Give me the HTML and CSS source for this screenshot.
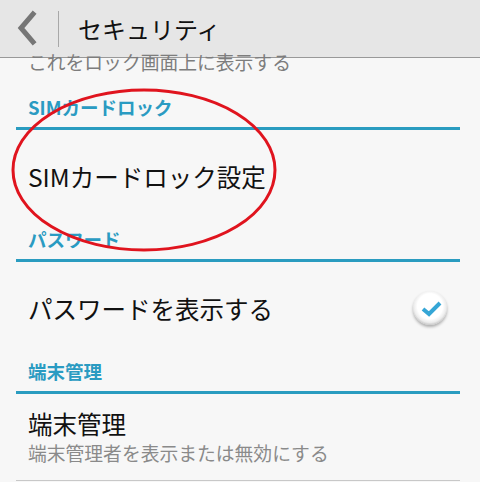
FILE: index.html
```html
<!DOCTYPE html>
<html lang="ja">
<head>
<meta charset="utf-8">
<link rel="stylesheet" href="styles.css">
</head>
<body>
<div class="screen">
  <header class="appbar">
    <svg class="back" width="58" height="57" viewBox="0 0 58 57">
      <polyline points="33,14 21,28 33,42" fill="none" stroke="#767676" stroke-width="5" stroke-linecap="square"/>
    </svg>
    <div class="divider"></div>
    <h1 class="title">セキュリティ</h1>
  </header>
  <main class="list">
    <div class="partial">これをロック画面上に表示する</div>
    <div class="section">SIMカードロック</div>
    <div class="item">SIMカードロック設定</div>
    <div class="section">パスワード</div>
    <div class="item check-item">
      <span>パスワードを表示する</span>
      <span class="check">
        <svg width="34" height="34" viewBox="0 0 34 34">
          <polyline points="10,18 16,23 27,12" fill="none" stroke="#35a6d6" stroke-width="4" stroke-linejoin="miter"/>
        </svg>
      </span>
    </div>
    <div class="section">端末管理</div>
    <div class="item two-line">
      <div class="item-title">端末管理</div>
      <div class="item-sub">端末管理者を表示または無効にする</div>
    </div>
  </main>
  <svg class="mark" width="480" height="482" viewBox="0 0 480 482">
    <ellipse cx="144" cy="170" rx="131" ry="80" fill="none" stroke="#e0141e" stroke-width="3"/>
  </svg>
</div>
</body>
</html>
```
FILE: styles.css
```css
html, body {
  margin: 0;
  padding: 0;
}
body {
  width: 480px;
  height: 482px;
  overflow: hidden;
  background: #f7f7f7;
  font-family: "Noto Sans CJK JP", "Noto Sans", sans-serif;
}
.screen {
  position: relative;
  width: 480px;
  height: 482px;
  overflow: hidden;
}
.appbar {
  display: flex;
  align-items: center;
  height: 57px;
  background: #e6e6e6;
  border-bottom: 1px solid #999;
}
.back {
  display: block;
  flex: none;
}
.divider {
  width: 1px;
  height: 36px;
  background: #a8a8a8;
  flex: none;
}
.title {
  margin: 0 0 0 19px;
  font-size: 24px;
  font-weight: 400;
  color: #111;
  line-height: 30px;
}
.list {
  margin: 0 20px 0 16px;
}
.partial {
  margin-top: -8.5px;
  padding: 0 12px 16.5px;
  line-height: 24px;
  font-size: 18.8px;
  color: #7d7d7d;
}
.section {
  padding: 5px 12px 8px;
  line-height: 24px;
  font-size: 18.5px;
  font-weight: 700;
  color: #2a9bc2;
  border-bottom: 3px solid #2a9cc0;
}
.item {
  height: 92px;
  display: flex;
  align-items: center;
  padding: 0 12px;
  font-size: 24.5px;
  color: #111;
}
.check-item {
  justify-content: space-between;
  padding-right: 13px;
}
.check {
  width: 34px;
  height: 34px;
  border-radius: 50%;
  background: radial-gradient(circle at 50% 45%, #ffffff 50%, #ececec 64%, #bdbdbd 76%, #a6a6a6 100%);
  box-shadow: 0 2px 3px rgba(0, 0, 0, 0.3);
  display: flex;
}
.two-line {
  height: auto;
  display: block;
  padding-top: 14px;
  padding-bottom: 14px;
  border-bottom: 1px solid #c8c8c8;
}
.item-title {
  line-height: 32px;
  font-size: 24.5px;
}
.item-sub {
  line-height: 26px;
  font-size: 18.8px;
  color: #8a8a8a;
}
.mark {
  position: absolute;
  left: 0;
  top: 0;
  pointer-events: none;
}
```
